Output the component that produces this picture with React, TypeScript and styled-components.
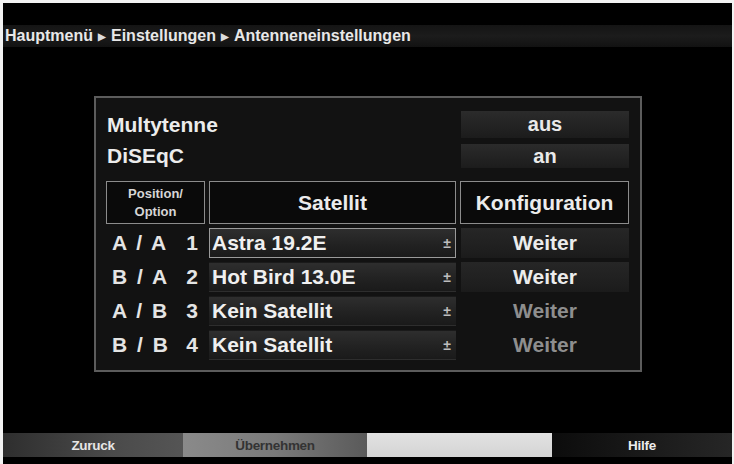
import React from "react";
import styled, { createGlobalStyle } from "styled-components";

const Global = createGlobalStyle`
  html, body { margin: 0; padding: 0; background: #f4f4f4; }
  body { font-family: "Liberation Sans", Arial, sans-serif; }
`;

const Frame = styled.div`
  width: 734px;
  height: 464px;
  box-sizing: border-box;
  padding: 3px 2px 0 3px;
  background: #f2f2f2;
`;

const Screen = styled.div`
  height: 461px;
  background: #000;
  display: flex;
  flex-direction: column;
  font-family: "Liberation Sans", Arial, sans-serif;
  color: #ececec;
`;

const Breadcrumb = styled.div`
  margin-top: 22px;
  height: 22px;
  background: linear-gradient(#141414, #1c1c1c 50%, #121212);
  display: flex;
  align-items: center;
  padding-left: 2px;
  font-size: 16px;
  font-weight: bold;
  color: #e8e8e8;
  white-space: nowrap;
`;

const Arrow = styled.span`
  font-size: 10px;
  margin: 0 5px;
  color: #ddd;
`;

const Panel = styled.div`
  margin: 49px 0 0 91px;
  width: 548px;
  height: 276px;
  box-sizing: border-box;
  border: 2px solid #5c5c5c;
  background: #121212;
  padding: 13px 10px 0 10px;
  display: grid;
  grid-template-columns: 99px 247px 169px;
  column-gap: 4px;
  grid-template-rows: 27px 26px 52px 30px 30px 30px 30px;
  row-gap: 4px;
  align-content: start;
`;

const Label = styled.div<{ $top?: number }>`
  grid-column: 1 / 3;
  font-size: 21px;
  font-weight: bold;
  display: flex;
  align-items: center;
  padding-left: 1px;
  margin-top: ${(p) => p.$top ?? 0}px;
`;

const ValueBox = styled.div<{ $top?: number }>`
  grid-column: 3;
  margin-left: 1px;
  background: linear-gradient(#2b2b2b, #222 60%, #1c1c1c);
  display: flex;
  align-items: center;
  justify-content: center;
  font-size: 20px;
  font-weight: bold;
  color: #eaeaea;
  margin-top: ${(p) => p.$top ?? 0}px;
`;

const HeadBox = styled.div<{ $small?: boolean }>`
  margin-top: 9px;
  border: 1.5px solid #8c8c8c;
  background: #0a0a0a;
  display: flex;
  flex-direction: column;
  align-items: center;
  justify-content: center;
  font-weight: bold;
  font-size: ${(p) => (p.$small ? "13px" : "21px")};
  line-height: ${(p) => (p.$small ? "18px" : "normal")};
  color: ${(p) => (p.$small ? "#d6d6d6" : "#ececec")};
`;

const PosCell = styled.div`
  display: flex;
  align-items: center;
  justify-content: space-between;
  padding: 0 7px 0 6px;
  font-size: 21px;
  font-weight: bold;
  color: #e4e4e4;
  white-space: pre;
  word-spacing: 4px;
`;

const Select = styled.div<{ $focus?: boolean }>`
  box-sizing: border-box;
  border: 1.5px solid ${(p) => (p.$focus ? "#9a9a9a" : "transparent")};
  background: linear-gradient(#2e2e2e, #222 55%, #1a1a1a);
  display: flex;
  align-items: center;
  justify-content: space-between;
  padding: 0 4px 0 2px;
  font-size: 21px;
  font-weight: bold;
  color: #f0f0f0;
`;

const Marker = styled.span`
  font-size: 14px;
  color: #bdbdbd;
  font-weight: bold;
`;

const Config = styled.div<{ $active?: boolean }>`
  margin-left: 1px;
  background: ${(p) =>
    p.$active ? "linear-gradient(#262626, #202020 60%, #1b1b1b)" : "transparent"};
  display: flex;
  align-items: center;
  justify-content: center;
  font-size: 21px;
  font-weight: bold;
  color: ${(p) => (p.$active ? "#ececec" : "#8e8e8e")};
`;

const BottomBar = styled.div`
  margin-top: 61px;
  height: 24px;
  display: grid;
  grid-template-columns: 180px 184px 185px 1fr;
`;

const Key = styled.div<{ $bg: string; $color: string }>`
  background: ${(p) => p.$bg};
  color: ${(p) => p.$color};
  display: flex;
  align-items: center;
  justify-content: center;
  font-size: 13.5px;
  font-weight: bold;
  letter-spacing: -0.3px;
`;

const rows = [
  { pos: "A / A", n: "1", sat: "Astra 19.2E", focus: true, active: true },
  { pos: "B / A", n: "2", sat: "Hot Bird 13.0E", focus: false, active: true },
  { pos: "A / B", n: "3", sat: "Kein Satellit", focus: false, active: false },
  { pos: "B / B", n: "4", sat: "Kein Satellit", focus: false, active: false },
];

export default function App() {
  return (
    <>
      <Global />
      <Frame>
        <Screen>
          <Breadcrumb>
            Hauptmenü<Arrow>▶</Arrow>Einstellungen<Arrow>▶</Arrow>Antenneneinstellungen
          </Breadcrumb>
          <Panel>
            <Label>Multytenne</Label>
            <ValueBox>aus</ValueBox>
            <Label $top={2}>DiSEqC</Label>
            <ValueBox $top={2}>an</ValueBox>
            <HeadBox $small>
              <span>Position/</span>
              <span>Option</span>
            </HeadBox>
            <HeadBox>Satellit</HeadBox>
            <HeadBox>Konfiguration</HeadBox>
            {rows.map((r) => (
              <React.Fragment key={r.n}>
                <PosCell>
                  <span>{r.pos}</span>
                  <span>{r.n}</span>
                </PosCell>
                <Select $focus={r.focus}>
                  <span>{r.sat}</span>
                  <Marker>±</Marker>
                </Select>
                <Config $active={r.active}>Weiter</Config>
              </React.Fragment>
            ))}
          </Panel>
          <BottomBar>
            <Key $bg="linear-gradient(90deg, #2e2e2e, #4a4a4a 60%, #555)" $color="#e6e6e6">
              Zuruck
            </Key>
            <Key $bg="linear-gradient(90deg, #8a8a8a, #7a7a7a 50%, #5a5a5a)" $color="#333">
              Übernehmen
            </Key>
            <Key $bg="linear-gradient(#e2e2e2, #d4d4d4)" $color="#333"></Key>
            <Key $bg="linear-gradient(90deg, #0c0c0c, #1c1c1c 60%, #262626)" $color="#ececec">
              Hilfe
            </Key>
          </BottomBar>
        </Screen>
      </Frame>
    </>
  );
}
